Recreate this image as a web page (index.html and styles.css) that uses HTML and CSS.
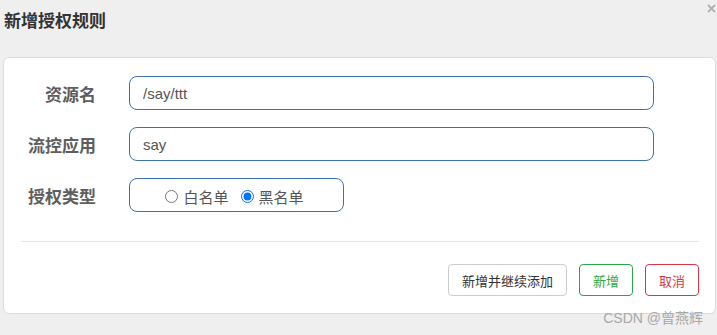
FILE: index.html
```html
<!DOCTYPE html>
<html>
<head>
    <meta charset="utf-8">
    <link rel="stylesheet" href="styles.css">
</head>
<body>
    <div class="dialog">
        <div class="dialog-header">
            <h3 class="dialog-title">新增授权规则</h3>
            <svg class="dialog-close" width="9" height="9" viewBox="0 0 9 9">
                <path d="M1 1L8 8M8 1L1 8" stroke="#b0b0b0" stroke-width="1.8" fill="none"/>
            </svg>
        </div>
        <div class="dialog-card">
            <form class="rule-form">
                <div class="form-row">
                    <label class="form-label">资源名</label>
                    <input class="form-input" type="text" value="/say/ttt">
                </div>
                <div class="form-row">
                    <label class="form-label">流控应用</label>
                    <input class="form-input" type="text" value="say">
                </div>
                <div class="form-row">
                    <label class="form-label">授权类型</label>
                    <div class="radio-group">
                        <label class="radio-item"><input type="radio" name="strategy"> 白名单</label>
                        <label class="radio-item"><input type="radio" name="strategy" checked> 黑名单</label>
                    </div>
                </div>
            </form>
            <div class="dialog-footer">
                <button class="btn btn-default">新增并继续添加</button>
                <button class="btn btn-success">新增</button>
                <button class="btn btn-danger">取消</button>
            </div>
        </div>
        <span class="watermark">CSDN @曾燕辉</span>
    </div>
</body>
</html>
```

FILE: styles.css
```css
html, body {
    margin: 0;
    padding: 0;
}
body {
    background: #efefef;
    font-family: "Liberation Sans", "Noto Sans CJK SC", sans-serif;
    color: #333;
}
.dialog {
    position: relative;
    height: 335px;
    overflow: hidden;
}
.dialog-header {
    height: 57px;
    box-sizing: border-box;
    padding: 11px 4px 0;
}
.dialog-title {
    margin: 0;
    font-size: 17px;
    line-height: 22px;
    font-weight: bold;
    color: #333;
}
.dialog-close {
    position: absolute;
    top: 4px;
    right: 1px;
}
.dialog-card {
    margin: 0 1px 0 3px;
    height: 257px;
    box-sizing: border-box;
    background: #fff;
    border: 1px solid #dcdcdc;
    border-radius: 6px;
    padding: 18px 16px 0 0;
}
.rule-form {
    display: flex;
    flex-direction: column;
    gap: 17px;
}
.form-row {
    display: flex;
    align-items: center;
    height: 34px;
}
.form-label {
    width: 92px;
    margin-right: 33px;
    text-align: right;
    font-size: 17px;
    font-weight: bold;
    color: #5e5e5e;
}
.form-input {
    width: 525px;
    height: 34px;
    box-sizing: border-box;
    border: 1px solid #3d72ad;
    border-radius: 8px;
    padding: 0 13px;
    font-family: inherit;
    font-size: 15px;
    color: #555;
    outline: none;
}
.radio-group {
    width: 215px;
    height: 34px;
    box-sizing: border-box;
    border: 1px solid #3d72ad;
    border-radius: 8px;
    display: flex;
    align-items: center;
    justify-content: center;
    gap: 12px;
    padding: 2px 4px 0 0;
}
.radio-item {
    display: flex;
    align-items: center;
    font-size: 15px;
    color: #555;
}
.radio-item input {
    margin: 0 5px 0 0;
    width: 13px;
    height: 13px;
}
.dialog-footer {
    margin: 29px 0 0 17px;
    border-top: 1px solid #e5e5e5;
    padding-top: 22px;
    display: flex;
    justify-content: flex-end;
    gap: 12px;
}
.btn {
    height: 32px;
    padding: 0 13px;
    background: #fff;
    border: 1px solid #ccc;
    border-radius: 4px;
    font-family: inherit;
    font-size: 13px;
    color: #333;
}
.btn-success {
    border-color: #28a745;
    color: #28a745;
}
.btn-danger {
    border-color: #dc3545;
    color: #dc3545;
}
.watermark {
    position: absolute;
    right: 14px;
    top: 309px;
    font-size: 14px;
    line-height: 18px;
    color: #a8a8a8;
}
```
